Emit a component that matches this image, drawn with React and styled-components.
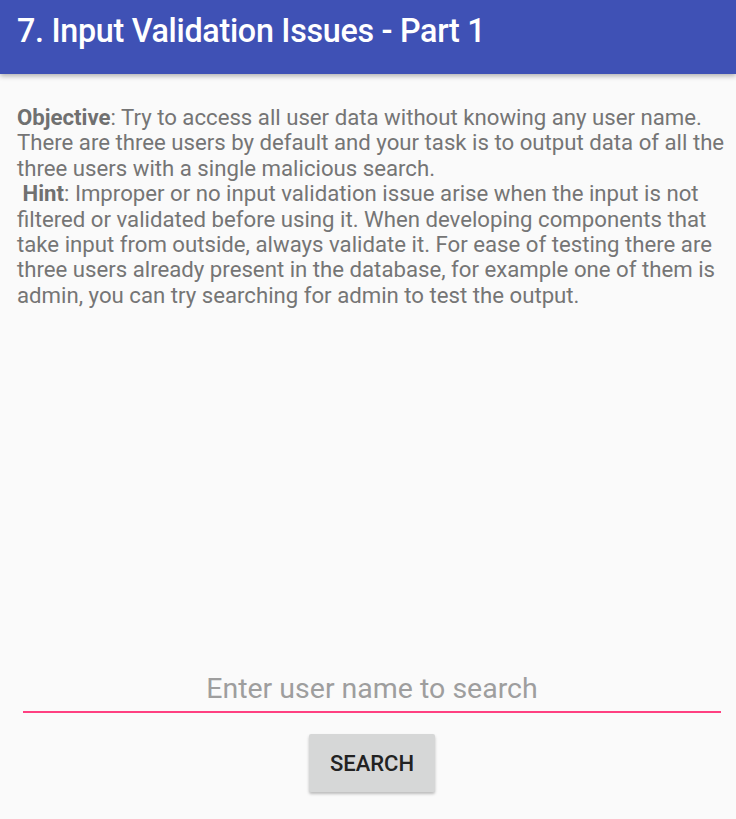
import React from 'react'
import styled, { createGlobalStyle } from 'styled-components'

const GlobalStyle = createGlobalStyle`
  html, body {
    margin: 0;
    padding: 0;
    background: #fafafa;
  }
  #root {
    min-height: 819px;
  }
`

const Screen = styled.div`
  width: 736px;
  height: 819px;
  display: flex;
  flex-direction: column;
  background: #fafafa;
  font-family: Roboto, 'Noto Sans', sans-serif;
  overflow: hidden;
`

const AppBar = styled.header`
  height: 74px;
  flex-shrink: 0;
  background: #3f51b5;
  display: flex;
  align-items: center;
  padding: 0 17px;
  box-shadow: 0 2px 5px rgba(0, 0, 0, 0.3);
  position: relative;
  z-index: 1;
`

const Title = styled.h1`
  margin: 0 0 12px;
  color: #ffffff;
  font-size: 32.3px;
  font-weight: 500;
  letter-spacing: -0.3px;
`

const Content = styled.main`
  flex: 1;
  display: flex;
  flex-direction: column;
  padding-top: 31px;
`

const Description = styled.p`
  margin: 0;
  padding: 0 6px 0 17px;
  color: #757575;
  font-size: 22.2px;
  line-height: 25.4px;
`

const Label = styled.b`
  font-weight: 700;
  color: #707070;
`

const SearchForm = styled.form`
  margin-top: auto;
  display: flex;
  flex-direction: column;
  align-items: center;
  padding: 0 15px 27px 23px;
`

const SearchInput = styled.input`
  width: 100%;
  box-sizing: border-box;
  border: none;
  border-bottom: 2px solid #ff4081;
  background: transparent;
  text-align: center;
  font-family: Roboto, sans-serif;
  font-size: 28.5px;
  padding: 0 0 6px;
  outline: none;
  color: #333;

  &::placeholder {
    color: #9e9e9e;
  }
`

const SearchButton = styled.button`
  margin-top: 21px;
  width: 126px;
  height: 58px;
  border: none;
  border-radius: 2px;
  background: #d6d7d7;
  color: #222;
  font-family: Roboto, sans-serif;
  font-size: 22px;
  font-weight: 500;
  box-shadow: 0 2px 3px rgba(0, 0, 0, 0.25);
`

export default function App() {
  return (
    <Screen>
      <GlobalStyle />
      <AppBar>
        <Title>7. Input Validation Issues - Part 1</Title>
      </AppBar>
      <Content>
        <Description>
          <Label>Objective</Label>: Try to access all user data without knowing any user name.
          There are three users by default and your task is to output data of all the three
          users with a single malicious search.
          <br />
          &nbsp;<Label>Hint</Label>: Improper or no input validation issue arise when the input
          is not filtered or validated before using it. When developing components that take
          input from outside, always validate it. For ease of testing there are three users
          already present in the database, for example one of them is admin, you can try
          searching for admin to test the output.
        </Description>
        <SearchForm onSubmit={e => e.preventDefault()}>
          <SearchInput placeholder="Enter user name to search" />
          <SearchButton type="submit">SEARCH</SearchButton>
        </SearchForm>
      </Content>
    </Screen>
  )
}
